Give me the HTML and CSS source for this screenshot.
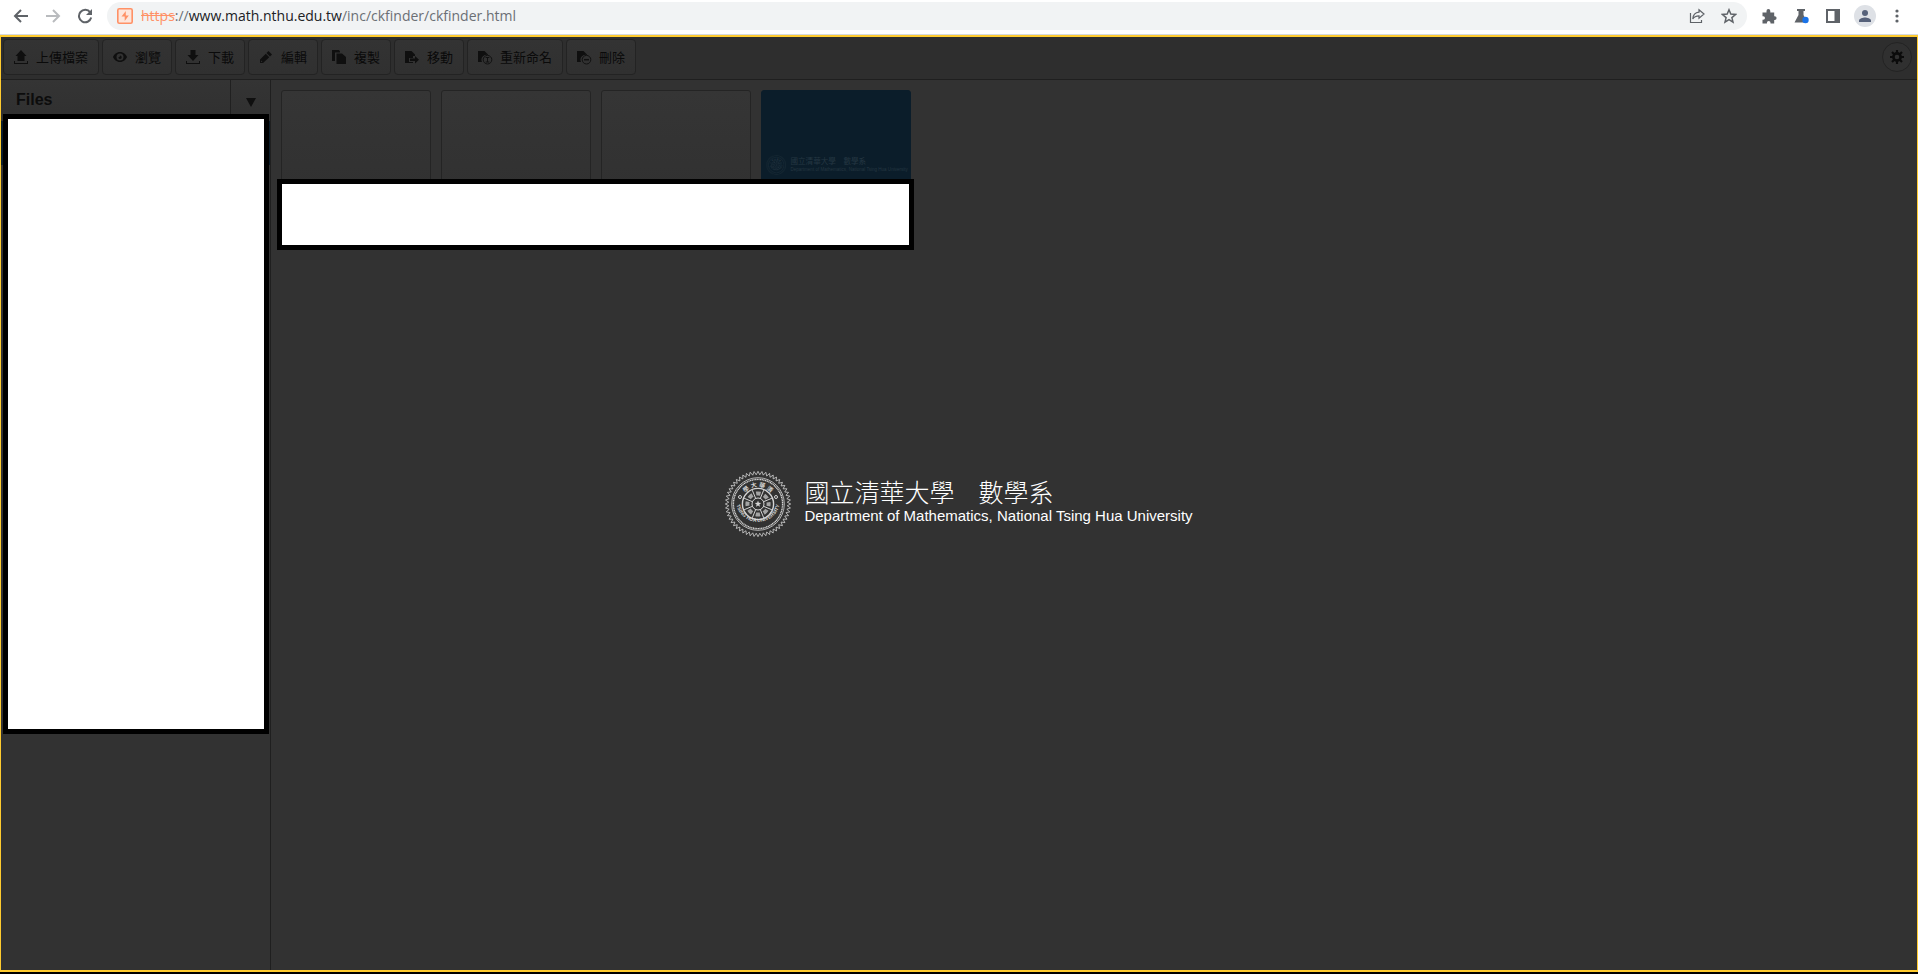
FILE: index.html
```html
<!DOCTYPE html>
<html lang="zh-Hant">
<head>
<meta charset="utf-8">
<title>CKFinder</title>
<link rel="stylesheet" href="styles.css">
</head>
<body>
<header class="browser">
  <button class="nav" aria-label="Back"><svg class="i16" viewBox="0 0 16 16"><path d="M15 8H2M8 2L2 8l6 6" fill="none" stroke="#5f6368" stroke-width="2"/></svg></button>
  <button class="nav" aria-label="Forward"><svg class="i16" viewBox="0 0 16 16"><path d="M1 8h13M8 2l6 6-6 6" fill="none" stroke="#b9bbbe" stroke-width="2"/></svg></button>
  <button class="nav" aria-label="Reload"><svg class="i16" viewBox="0 0 16 16"><path d="M13.2 4.4A6.2 6.2 0 1 0 14.2 9.6" fill="none" stroke="#5f6368" stroke-width="2"/><path d="M15 1v6H9z" fill="#5f6368"/></svg></button>
  <div class="address">
    <svg class="i16 site" viewBox="0 0 16 16"><rect x=".8" y=".8" width="14.4" height="14.4" rx="1.5" fill="#fde6dc" stroke="#ff9166" stroke-width="1.6"/><path d="M8.800 3L4.500 8.600h3.200V13l4.100-5.600H8.800z" fill="#ff9166"/></svg>
    <p class="url"><s>https</s><span>://</span><b>www.math.nthu.edu.tw</b><span>/inc/ckfinder/ckfinder.html</span></p>
    <button class="nav" aria-label="Share"><svg class="i16" viewBox="0 0 16 16"><path d="M1.500 5v9.500h11V12" fill="none" stroke="#5f6368" stroke-width="1.200"/><path d="M10 1.800l5 4.200-5 4.200V7.800C7 7.800 5 8.700 3.800 11 4 7.500 6.200 4.600 10 4.200z" fill="none" stroke="#5f6368" stroke-width="1.200"/></svg></button>
    <button class="nav" aria-label="Bookmark"><svg class="i16" viewBox="0 0 16 16"><path d="M8 1.800l1.800 4.300 4.700.4-3.600 3.100 1.100 4.600L8 11.700l-4 2.500 1.100-4.600L1.500 6.500l4.700-.4z" fill="none" stroke="#5f6368" stroke-width="1.500"/></svg></button>
  </div>
  <div class="ext">
    <button class="nav" aria-label="Extensions"><svg class="i16" viewBox="0 0 16 16"><path d="M1.500 4.500h4V3a1.900 1.900 0 0 1 3.800 0v1.500h3.900v3.700h.5a1.900 1.900 0 0 1 0 3.800h-.5v3.500H9.500v-.7a1.800 1.800 0 0 0-3.600 0v.7H1.500v-3.700h.7a1.800 1.800 0 0 0 0-3.600h-.7z" fill="#5f6368"/></svg></button>
    <button class="nav" aria-label="Experiments"><svg class="i16" viewBox="0 0 16 16"><path d="M4 1h8v2h-1.500v4l4 7.500H1.500l4-7.500V3H4z" fill="#5f6368"/><circle cx="12.500" cy="12" r="3.200" fill="#1a73e8"/></svg></button>
    <button class="nav" aria-label="Side panel"><svg class="i16" viewBox="0 0 16 16"><path d="M1 1h14v14H1zM3 3v10h6.500V3z" fill="#5f6368" fill-rule="evenodd"/></svg></button>
    <button class="nav profile" aria-label="Profile"><svg class="i22" viewBox="0 0 22 22"><circle cx="11" cy="11" r="11" fill="#dee1e6"/><circle cx="11" cy="8" r="3" fill="#56617a"/><path d="M5 17v-1.500c0-2 4-3 6-3s6 1 6 3V17z" fill="#56617a"/></svg></button>
    <button class="nav" aria-label="Menu"><svg class="i16" viewBox="0 0 16 16"><g fill="#5f6368"><circle cx="8" cy="3" r="1.600"/><circle cx="8" cy="8" r="1.600"/><circle cx="8" cy="13" r="1.600"/></g></svg></button>
  </div>
</header>
<div class="app">
  <nav class="toolbar">
    <button class="tool"><svg class="i16" viewBox="0 0 16 16"><path d="M8 1l5.500 6H11.500v5h-7V7h-2zM1 12h1v2h12v-2h1v3H1z"/></svg>上傳檔案</button>
    <button class="tool"><svg class="i16" viewBox="0 0 16 16"><path d="M8 3c3.500 0 6 2.500 7 5-1 2.500-3.500 5-7 5s-6-2.500-7-5c1-2.500 3.500-5 7-5zm0 1.500a3.500 3.500 0 1 0 0 7 3.500 3.500 0 0 0 0-7zm0 2a1.700 1.700 0 1 1-1.700 1.800C7 8.500 8 8 8 6.500z" fill-rule="evenodd"/></svg>瀏覽</button>
    <button class="tool"><svg class="i16" viewBox="0 0 16 16"><path d="M5.500 1h5v5h3L8 12 2.500 6h3zM1 12h1v2h12v-2h1v3H1z"/></svg>下載</button>
    <button class="tool"><svg class="i16" viewBox="0 0 16 16"><path d="M10.500 2L14 5.500l-2 2L8.500 4zM7.800 4.700l3.500 3.500L5 14H2v-3.500zM3 11.500v1.500h1.500z" fill-rule="evenodd"/></svg>編輯</button>
    <button class="tool"><svg class="i16" viewBox="0 0 16 16"><path d="M1 1h7l1 1.500v1H4V12H1zM5.500 4.500H11L15 8v7H5.500z"/></svg>複製</button>
    <button class="tool"><svg class="i16" viewBox="0 0 16 16"><path d="M1 2h6.500L11 5.500V7H9v2H5v4h4v1H1z"/><path d="M6 9.500h5V7l4 3.800-4 3.700V12H6z"/></svg>移動</button>
    <button class="tool"><svg class="i16" viewBox="0 0 16 16"><path d="M1 2h6.500L11 5.500V6a5 5 0 0 0-6 7H1z"/><circle cx="10.500" cy="10.700" r="4.300" fill="none" stroke="#111"/><path d="M8.700 8.500h3.600M8.700 13h3.600M10.500 8.500V13" fill="none" stroke="#111"/></svg>重新命名</button>
    <button class="tool"><svg class="i16" viewBox="0 0 16 16"><path d="M1 2h6.500L11 5.500V6a5 5 0 0 0-6 7H1z"/><circle cx="10.500" cy="10.700" r="4.300" fill="none" stroke="#111"/><path d="M8 10.700h5" fill="none" stroke="#111" stroke-width="1.500"/></svg>刪除</button>
    <button class="settings" aria-label="Settings"><svg class="i16" viewBox="0 0 16 16"><circle cx="8" cy="8" r="3.600" fill="none" stroke="#0b0b0b" stroke-width="2.600"/><path d="M8 1v3M8 12v3M1 8h3M12 8h3M3 3l2.200 2.200M10.800 10.800L13 13M13 3l-2.200 2.200M5.200 10.800L3 13" fill="none" stroke="#0b0b0b" stroke-width="2.200"/></svg></button>
  </nav>
  <div class="body">
    <aside class="side">
      <div class="sidehead"><h1 class="title">Files</h1><button class="drop" aria-label="Folder menu"><svg class="tri" viewBox="0 0 10 9"><path d="M0 0h10L5 9z"/></svg></button></div>
      <div class="folder"></div>
      <div class="cover cover-side"></div>
    </aside>
    <main class="files">
      <div class="thumb"></div>
      <div class="thumb"></div>
      <div class="thumb"></div>
      <div class="thumb blue">
        <svg class="mini" viewBox="0 0 467 66"><g class="seal" transform="translate(33 33)"></g><text x="80" y="30" font-size="25">國立清華大學　數學系</text><text x="80" y="54" font-size="15">Department of Mathematics, National Tsing Hua University</text></svg>
      </div>
      <div class="cover cover-files"></div>
    </main>
  </div>
  <div class="overlay">
    <svg class="crest" viewBox="0 0 66 66" aria-hidden="true"><g class="seal" transform="translate(33 33)"></g></svg>
    <div class="names">
      <p class="zh"><span>國立清華大學</span><span>數學系</span></p>
      <p class="en">Department of Mathematics, National Tsing Hua University</p>
    </div>
  </div>
</div>
<script src="seal.js"></script>
</body>
</html>
```

FILE: styles.css
```css
* { box-sizing: border-box; }
body { margin: 0; min-height: 100vh; display: flex; flex-direction: column; background: #000; font-family: "Liberation Sans", "Noto Sans CJK TC", sans-serif; }
p, h1 { margin: 0; }
button { border: 0; padding: 0; background: none; font: inherit; color: inherit; }
svg { display: block; flex: none; }
.i16 { width: 16px; height: 16px; }
.i22 { width: 22px; height: 22px; }
.browser { display: flex; align-items: center; gap: 16px; height: 35px; padding: 0 13px 2px; background: #fff; border-bottom: 1px solid #d5dae2; }
.nav { display: flex; }
.address { flex: 1; display: flex; align-items: center; gap: 16px; height: 28px; margin: 0 -2px; border-radius: 14px; background: #f1f3f4; padding: 0 10px; }
.url { flex: 1; margin-left: -8px; font: 14px/20px "Open Sans", sans-serif; color: #6b6f74; }
.url s { color: #ff9166; }
.url b { font-weight: 400; color: #202124; }
.ext { display: flex; align-items: center; gap: 16px; }
.profile { margin: 0 -3px; }
.app { flex: 1; position: relative; display: flex; flex-direction: column; border: solid #ffcb2f; border-width: 2px 1px; margin-bottom: 2px; background: #323232; }
.toolbar { display: flex; align-items: center; gap: 3px; height: 43px; padding: 0 5px 2px 2px; background: #2e2e2e; border-bottom: 1px solid #1f1f1f; color: #0a0a0a; }
.tool { display: flex; align-items: center; gap: 7px; height: 36px; padding: 0 10px 0 9px; border: 1px solid #232323; border-radius: 4px; background: linear-gradient(#333, #303030); font: 13px/16px "Noto Sans CJK TC", sans-serif; }
.toolbar svg, .tri { fill: #0f0f0f; }
.settings { display: grid; place-items: center; width: 30px; height: 30px; margin-left: auto; border: 1px solid #232323; border-radius: 50%; background: #303030; }
.body { flex: 1; display: flex; }
.side { position: relative; width: 270px; border-right: 1px solid #1f1f1f; }
.sidehead { display: flex; height: 41px; background: linear-gradient(#343434, #303030); }
.title { flex: 1; padding: 11px 15px; font-size: 16px; line-height: 18px; color: #0c0c0c; }
.drop { display: grid; place-items: center; width: 40px; border-left: 1px solid #202020; padding-top: 4px; }
.tri { width: 10px; height: 9px; }
.folder { height: 44px; background: #0b1d2a; }
.cover { position: absolute; border: 5px solid #000; background: #fff; }
.cover-side { left: 2px; right: 1px; top: 34px; height: 620px; }
.files { position: relative; flex: 1; display: flex; align-items: flex-start; gap: 10px; padding: 10px; }
.thumb { width: 150px; height: 150px; border: 1px solid #242424; border-radius: 3px; background: linear-gradient(#353535, #2f2f2f); }
.blue { padding: 64px 1px 0 3px; border-color: #0b1d2a; background: #0b1d2a; }
.mini { width: 144px; height: 20px; fill: #2c3d49; opacity: .8; color: #2c3d49; }
.cover-files { left: 6px; top: 99px; width: 637px; height: 71px; }
.overlay { position: absolute; inset: 0; display: flex; align-items: center; justify-content: center; gap: 13px; color: #fff; pointer-events: none; }
.crest { width: 66px; height: 66px; color: #d4d4d4; }
.names { padding-bottom: 3px; }
.zh { display: flex; gap: 24px; font: 300 25px/27px "Noto Sans CJK TC", sans-serif; }
.en { font-size: 15px; line-height: 22px; }
```

FILE: seal.js
```js
// Draws the university crest: a toothed rim, rings of lettering and a spoked wheel.
const polar = (r, a) => `${(r * Math.cos(a)).toFixed(2)} ${(r * Math.sin(a)).toFixed(2)}`;
document.querySelectorAll(".seal").forEach((g, n) => {
  const teeth = 52;
  let rim = "";
  for (let i = 0; i < teeth * 2; i++) rim += (i ? "L" : "M") + polar(i % 2 ? 29.3 : 32.7, i * Math.PI / teeth);
  let spokes = "";
  for (let i = 0; i < 8; i++) {
    const a = (i + 0.5) * Math.PI / 4;
    spokes += `M${polar(5.5, a)}L${polar(15, a)}`;
  }
  let star = "";
  for (let i = 0; i < 10; i++) star += (i ? "L" : "M") + polar(i % 2 ? 1.4 : 3.4, -Math.PI / 2 + i * Math.PI / 5);
  g.innerHTML = `<g fill="none" stroke="currentColor">
    <path d="${rim}Z" stroke-width=".8"/>
    <circle r="26.3" stroke-width=".8"/><circle r="24.6" stroke-width="1.4" stroke-dasharray="1.2 .5"/>
    <circle r="15.6" stroke-width="1.4"/><circle r="10.600" stroke-width="4" stroke-dasharray="4.500 3.825" stroke-dashoffset="2.250" opacity=".7"/>
    <circle r="6" stroke-width="1"/><path d="${spokes}" stroke-width="1"/>
    <circle cx="-18" cy="-7" r="1.500"/><circle cx="18" cy="-7" r="1.500"/></g>
    <path d="${star}Z" fill="currentColor"/>
    <path id="top${n}" d="M-17 0A17 17 0 0 1 17 0" fill="none"/>
    <path id="low${n}" d="M-22 -2A22.100 22.100 0 0 0 22 -2" fill="none"/>
    <g fill="currentColor" font-weight="700" text-anchor="middle">
    <text font-size="6"><textPath href="#top${n}" startOffset="50%">學 大 華 清</textPath></text>
    <text font-size="5"><textPath href="#low${n}" startOffset="50%">TSING HUA UNIVERSITY</textPath></text></g>`;
});
```
